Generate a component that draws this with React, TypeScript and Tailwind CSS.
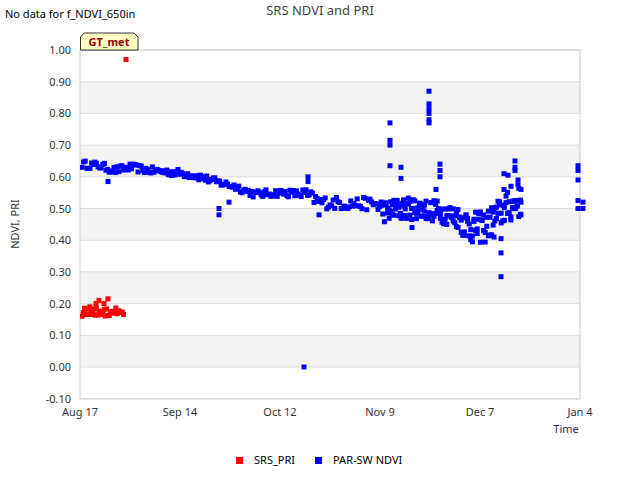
import React from "react";

const X0 = 80, X1 = 580, Y0 = 50, Y1 = 399;
const yv = (v: number) => 367 - v * 317;

function rnd(seed: number) {
  let s = seed;
  return () => {
    s = (s * 16807) % 2147483647;
    return (s - 1) / 2147483646;
  };
}

const trend: [number, number][] = [
  [80, 0.64], [100, 0.635], [115, 0.62], [130, 0.63], [150, 0.62], [170, 0.615],
  [185, 0.61], [200, 0.6], [215, 0.585], [235, 0.57], [255, 0.545], [280, 0.55],
  [305, 0.545], [320, 0.52], [350, 0.515], [375, 0.515], [385, 0.49], [400, 0.5],
  [420, 0.5], [440, 0.49], [460, 0.47], [470, 0.44], [485, 0.44], [495, 0.47], [505, 0.5], [520, 0.52],
];
function tAt(x: number) {
  for (let i = 0; i < trend.length - 1; i++) {
    const [a, av] = trend[i], [b, bv] = trend[i + 1];
    if (x >= a && x <= b) return av + ((x - a) / (b - a)) * (bv - av);
  }
  return 0.52;
}

const r = rnd(12345);
const blue: [number, number][] = [];
for (let x = 82; x <= 522; x += 1.6) {
  const base = tAt(x);
  const spread = x < 300 ? 0.012 : x < 380 ? 0.02 : x < 460 ? 0.035 : 0.05;
  const n = x > 380 ? 2 : 1;
  for (let k = 0; k < n; k++) blue.push([x, base + (r() - 0.5) * 2 * spread]);
}
const extraBlue: [number, number][] = [
  [108, 0.585], [219, 0.5], [219, 0.48], [229, 0.52], [308, 0.6], [308, 0.585], [304, 0.0], [319, 0.48],
  [390, 0.77], [390, 0.715], [390, 0.7], [390, 0.635], [401, 0.63], [401, 0.595], [401, 0.47],
  [429, 0.87], [429, 0.83], [429, 0.815], [429, 0.8], [429, 0.78], [429, 0.77],
  [440, 0.64], [440, 0.62], [440, 0.6], [436, 0.56], [412, 0.44], [494, 0.41], [501, 0.36], [501, 0.285],
  [501, 0.405], [504, 0.61], [504, 0.56], [508, 0.605], [511, 0.57], [515, 0.65], [515, 0.63], [515, 0.62],
  [518, 0.59], [518, 0.575], [521, 0.56], [521, 0.52], [521, 0.48],
  [578, 0.635], [578, 0.62], [578, 0.59], [578, 0.525], [578, 0.5], [583, 0.5], [583, 0.52],
];
const r2 = rnd(999);
const red: [number, number][] = [];
for (let x = 82; x <= 124; x += 1.3) red.push([x, 0.175 + (r2() - 0.5) * 0.03]);
red.push([96, 0.2], [99, 0.21], [104, 0.2], [108, 0.215], [126, 0.97]);

const yTicks = [1, 0.9, 0.8, 0.7, 0.6, 0.5, 0.4, 0.3, 0.2, 0.1, 0, -0.1];
const xTicks: [number, string][] = [[80, "Aug 17"], [180, "Sep 14"], [280, "Oct 12"], [380, "Nov 9"], [480, "Dec 7"], [580, "Jan 4"]];

export default function App() {
  return (
    <div className="w-[640px] h-[480px] bg-white font-['DejaVu_Sans',sans-serif]">
      <svg width="640" height="480" viewBox="0 0 640 480">
        <defs>
          <clipPath id="pc"><rect x={X0} y={Y0} width={X1 - X0 + 6} height={Y1 - Y0} /></clipPath>
        </defs>
        {[0.8, 0.6, 0.4, 0.2, 0].map((v) => (
          <rect key={v} x={X0} y={yv(v + 0.1)} width={X1 - X0} height={31.7} fill="#f2f2f2" />
        ))}
        {yTicks.map((v) => (
          <g key={v}>
            <line x1={X0} x2={X1} y1={yv(v)} y2={yv(v)} stroke="#dddddd" strokeWidth="1" />
            <text x={71} y={yv(v) + 4} textAnchor="end" fontSize="11" fill="#333">{v.toFixed(2)}</text>
          </g>
        ))}
        <rect x={X0} y={Y0} width={X1 - X0} height={Y1 - Y0} fill="none" stroke="#cccccc" />
        {xTicks.map(([x, l]) => (
          <text key={l} x={x} y={416} textAnchor="middle" fontSize="11" fill="#333">{l}</text>
        ))}
        <text x={566} y={433} textAnchor="middle" fontSize="11" fill="#333">Time</text>
        <text x={19} y={224} textAnchor="middle" fontSize="11" fill="#333" transform="rotate(-90 19 224)">NDVI, PRI</text>
        <text x={320} y={15} textAnchor="middle" fontSize="13" fill="#444">SRS NDVI and PRI</text>
        <text x={5} y={18} fontSize="11" fill="#000">No data for f_NDVI_650in</text>
        <g clipPath="url(#pc)">
          {[...blue, ...extraBlue].map(([x, v], i) => (
            <rect key={"b" + i} x={x - 2.5} y={yv(v) - 2.5} width="5" height="5" fill="#0000ff" />
          ))}
          {red.map(([x, v], i) => (
            <rect key={"r" + i} x={x - 2.5} y={yv(v) - 2.5} width="5" height="5" fill="#ff0000" />
          ))}
        </g>
        <path d="M80.5 50 L80.5 37 L84 33 L134 33 L138 37 L138 50 Z" fill="#ffffc8" stroke="#000" strokeWidth="0.8" />
        <text x={109} y={46} textAnchor="middle" fontSize="11" fontWeight="bold" fill="#990000">GT_met</text>
        <rect x={236} y={457} width="7" height="7" fill="#ff0000" />
        <text x={254} y={464} fontSize="11" fill="#000">SRS_PRI</text>
        <rect x={315} y={457} width="7" height="7" fill="#0000ff" />
        <text x={333} y={464} fontSize="11" fill="#000">PAR-SW NDVI</text>
      </svg>
    </div>
  );
}
